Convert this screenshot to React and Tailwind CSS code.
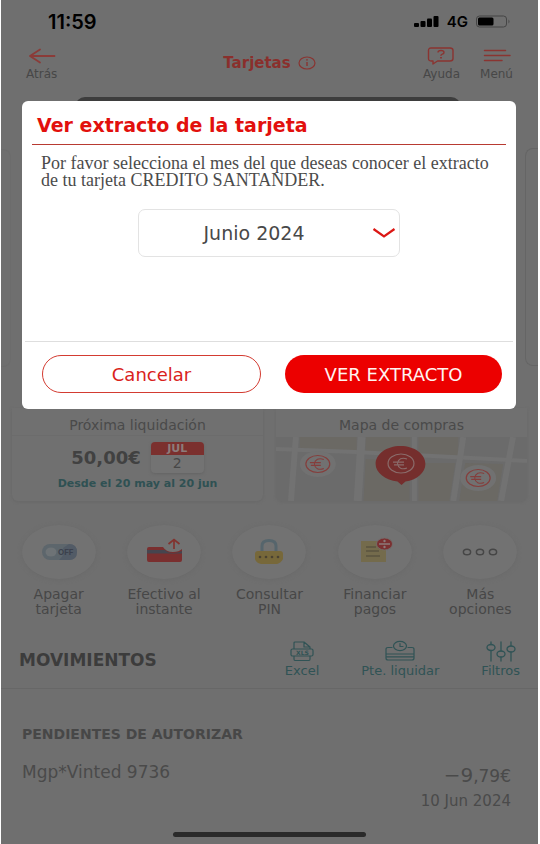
import React from "react";

function StatusBar() {
  return (
    <div className="flex h-[43px] items-center justify-between pl-[47px] pr-[27px] font-['Inter',sans-serif] text-black">
      <span className="text-[20px] font-semibold leading-5">11:59</span>
      <div className="flex items-center gap-2">
        <svg width="25" height="12" viewBox="0 0 25 12" fill="currentColor" aria-hidden="true">
          <rect x="0" y="7" width="5" height="4" rx="1" />
          <rect x="6.500" y="5" width="5" height="6" rx="1" />
          <rect x="13" y="2.500" width="5" height="8.500" rx="1" />
          <rect x="19.500" y="0" width="5" height="11" rx="1" />
        </svg>
        <span className="text-[15px] font-semibold leading-5">4G</span>
        <svg width="35" height="13" viewBox="0 0 35 13" aria-hidden="true">
          <rect x="0.500" y="1" width="30" height="11" rx="3" fill="none" stroke="#454545" />
          <rect x="2" y="2.500" width="15.500" height="8" rx="1.500" fill="#000" />
          <path d="M32.500 4.500q2 2 0 4z" fill="#454545" />
        </svg>
      </div>
    </div>
  );
}

function Header() {
  return (
    <header className="grid h-[54px] grid-cols-3 px-[25px] text-[12px] leading-[14px] text-[#474747]">
      <button className="flex flex-col items-start justify-start pt-[4px]">
        <svg width="30" height="18" viewBox="0 0 30 18" fill="none" stroke="#8b3b38" strokeWidth="1.800" strokeLinecap="round" strokeLinejoin="round" aria-hidden="true">
          <path d="M28.500 9H4M14 2.500L4 9l10 6.500" />
        </svg>
        <span className="mt-[2px]">Atrás</span>
      </button>
      <h1 className="flex h-[40px] items-center justify-center gap-[7px] text-[15px] font-bold leading-5 text-[#8a2f2c]">
        Tarjetas
        <svg width="18" height="14" viewBox="0 0 18 14" fill="none" stroke="#8a3431" aria-hidden="true">
          <ellipse cx="9" cy="7" rx="8" ry="6" strokeWidth="1.200" />
          <path d="M9 6v4" strokeWidth="1.400" />
          <circle cx="9" cy="3.900" r="0.400" fill="#8a3431" />
        </svg>
      </h1>
      <div className="flex items-start justify-end gap-[20px] pt-[4px]">
        <button className="flex flex-col items-center">
          <svg width="28" height="18" viewBox="0 0 28 18" fill="none" stroke="#8a3431" strokeWidth="1.400" strokeLinejoin="round" aria-hidden="true">
            <path d="M4 1h19q3 0 3 2.500v8q0 2.500-3 2.500H10.500L6 17v-3H4q-2.500 0-2.500-2.500v-8Q1.500 1 4 1z" />
            <path d="M11 5.500q0-2 3-2t3 2q0 1.200-1.600 1.700T14 8.800" />
            <path d="M14 10v1.400" strokeWidth="1.800" />
          </svg>
          <span className="mt-[2px]">Ayuda</span>
        </button>
        <button className="flex flex-col items-center">
          <svg width="28" height="18" viewBox="0 0 28 18" fill="none" stroke="#8a3431" strokeWidth="1.500" strokeLinecap="round" aria-hidden="true">
            <path d="M1.500 3.500h21M1.500 8.500h25.500M1.500 13.500h17.500" />
          </svg>
          <span className="mt-[2px]">Menú</span>
        </button>
      </div>
    </header>
  );
}

function CardCarousel() {
  return (
    <div className="flex h-[311px] justify-between">
      <div className="mt-[52px] h-[218px] w-[10px] rounded-r-[8px] border border-l-0 border-[#6c6c6c]" />
      <div className="h-[200px] w-[386px] rounded-[10px] bg-[#3d3d3d]" />
      <div className="mt-[51px] h-[218px] w-[13px] rounded-l-[8px] border border-r-0 border-[#656565]" />
    </div>
  );
}

function Euro({ x, y, rx, ry, color }) {
  return (
    <g fill="none" stroke={color}>
      <ellipse cx={x} cy={y} rx={rx} ry={ry} strokeWidth="1.200" />
      <path
        d={`M${x + 6} ${y - 4.5}c-5-2-9 0-9.500 4.500c0.500 4.500 4.500 6.500 9.500 4.500M${x - 8} ${y - 1.4}h11M${x - 7} ${y + 1.4}h10`}
        strokeWidth="1.100"
      />
    </g>
  );
}

function MapDrawing() {
  return (
    <svg className="block h-[64px] w-full" viewBox="0 0 252 64" preserveAspectRatio="none" aria-hidden="true">
      <rect width="252" height="64" fill="#6b6b6b" />
      <path d="M24 0h57v14L24 13zM90 0h45v17l-45-2zM143 0h40v19l-40-1zM90 22l44 2v40H88zM143 26h37l-6 38h-31zM190 26l38 1-6 37h-38z" fill="#6b6964" />
      <g stroke="#727272" fill="none">
        <path d="M0 12l80 3 172 9" strokeWidth="4" />
        <path d="M20 0l-5 64M188 0l-10 64M238 0l-12 64" strokeWidth="6" />
        <path d="M86 0l-4 64" strokeWidth="8" />
        <path d="M139 0v64" strokeWidth="5" />
      </g>
      <ellipse cx="42" cy="27" rx="18" ry="13" fill="#717171" />
      <ellipse cx="203" cy="41" rx="18" ry="13" fill="#717171" />
      <path d="M125 9c14 0 25 8 25 18 0 9-9 16-20 17.500L126 48l-4-3.500C110 43 100 36 100 27c0-10 11-18 25-18z" fill="#752e2d" />
      <Euro x={42} y={27} rx={12} ry={8.5} color="#853e3c" />
      <Euro x={125.5} y={26.500} rx={13} ry={9.5} color="#8a6b6a" />
      <Euro x={203} y={41} rx={12} ry={8.5} color="#853e3c" />
    </svg>
  );
}

function Summary() {
  return (
    <section className="grid grid-cols-2 gap-[13px] pl-[11px] pr-[11px]">
      <article className="flex h-[93px] flex-col items-center rounded-b-[6px] bg-[#707070] shadow-[0_1px_3px_#686868]">
        <h2 className="flex h-[28px] w-full items-center justify-center border-b border-[#6c6c6c] pt-[6px] text-[14px] leading-4 text-[#4a4a4a]">Próxima liquidación</h2>
        <div className="mt-[6px] flex items-center gap-[10px]">
          <strong className="text-[18px] leading-5 text-[#414141]">50,00€</strong>
          <div className="flex h-[31px] w-[53px] flex-col overflow-hidden rounded-[4px] bg-[#737373] text-center shadow-[0_1px_3px_#646464]">
            <span className="h-[13px] bg-[#7b302e] text-[11px] font-bold leading-[13px] text-[#8d7c7b]">JUL</span>
            <span className="text-[14px] leading-[17px] text-[#474747]">2</span>
          </div>
        </div>
        <p className="mt-[3px] text-[11px] font-bold leading-[16px] text-[#2f5153]">Desde el 20 may al 20 jun</p>
      </article>
      <article className="h-[93px] overflow-hidden rounded-b-[6px] bg-[#707070] shadow-[0_1px_3px_#696969]">
        <h2 className="flex h-[29px] items-center justify-center pt-[5px] text-[14px] leading-4 text-[#4a4a4a]">Mapa de compras</h2>
        <MapDrawing />
      </article>
    </section>
  );
}

const actionIcons = {
  toggle: (
    <>
      <rect x="20" y="19" width="35" height="16" rx="8" fill="#5d666c" />
      <path d="M47 19q8 0 8 8t-8 8H37q7-6 4-12 3-2 6-4z" fill="#525b66" />
      <ellipse cx="29" cy="27" rx="5.500" ry="4.500" fill="#6e7376" />
      <text x="36" y="30" fontSize="8" fontWeight="700" fontFamily="Inter, sans-serif" fill="#3c414d">OFF</text>
    </>
  ),
  cash: (
    <>
      <path d="M20 24q0-2 2-2h14q3 5 10 5 6 0 9-3v11q0 2-2 2H22q-2 0-2-2z" fill="#7a2f2f" />
      <path d="M20 25h18q3 3 8 3t9-2v2.500H20z" fill="#46454f" />
      <path d="M47 24V15M41.500 19l5.500-4.500 5.500 4.500" stroke="#82332f" strokeWidth="1.700" fill="none" />
    </>
  ),
  lock: (
    <>
      <path d="M30 28v-7q0-5.500 7-5.500t7 5.500v7" stroke="#56656c" strokeWidth="3" fill="none" />
      <path d="M23 29q0-3 3-3h22q3 0 3 3v5q-2 4-6 5H29q-5-1-6-5z" fill="#77683a" />
      <g fill="#4a4232"><circle cx="28" cy="32" r="1.300" /><circle cx="34" cy="32" r="1.300" /><circle cx="40" cy="32" r="1.300" /><circle cx="46" cy="32" r="1.300" /></g>
    </>
  ),
  note: (
    <>
      <path d="M23 16h25v21H23z" fill="#746b4c" />
      <path d="M28 22h10M28 26h13M28 31h14" stroke="#4d4838" strokeWidth="1.200" />
      <ellipse cx="46.500" cy="19" rx="8" ry="6" fill="#7b3031" stroke="#737170" strokeWidth="0.800" />
      <path d="M41 19h11" stroke="#8c7a7a" strokeWidth="1.600" />
      <g fill="#8c7a7a"><circle cx="46.500" cy="16" r="1.200" /><circle cx="46.500" cy="22" r="1.200" /></g>
    </>
  ),
  more: (
    <g fill="none" stroke="#464646" strokeWidth="1.500">
      <ellipse cx="24" cy="27" rx="3.600" ry="2.800" /><ellipse cx="37" cy="27" rx="3.600" ry="2.800" /><ellipse cx="50" cy="27" rx="3.600" ry="2.800" />
    </g>
  ),
};

const actions = [
  ["toggle", "Apagar", "tarjeta"],
  ["cash", "Efectivo al", "instante"],
  ["lock", "Consultar", "PIN"],
  ["note", "Financiar", "pagos"],
  ["more", "Más", "opciones"],
];

function Actions() {
  return (
    <nav className="mt-[24px] grid grid-cols-5 pl-[5px] pr-[5px]">
      {actions.map(([icon, first, second]) => (
        <button key={icon} className="flex flex-col items-center text-[14px] leading-[15px] text-[#474747]">
          <svg className="mb-[8px] rounded-[50%] shadow-[0_1px_4px_#6a6a6a]" width="74" height="54" viewBox="0 0 74 54" aria-hidden="true">
            <ellipse cx="37" cy="27" rx="37" ry="27" fill="#727272" />
            {actionIcons[icon]}
          </svg>
          <span>{first}</span>
          <span>{second}</span>
        </button>
      ))}
    </nav>
  );
}

function Movements() {
  return (
    <section>
      <div className="mt-[22px] flex h-[50px] items-start justify-between border-b border-[#676767] pl-[18px] pr-[18px]">
        <h2 className="pt-[11px] text-[17px] font-bold leading-5 text-[#3c3c3c]">MOVIMIENTOS</h2>
        <div className="flex gap-[42px] pt-px text-[13px] leading-[14px] text-[#305355]">
          <button className="flex flex-col items-center">
            <svg width="26" height="22" viewBox="0 0 26 22" fill="none" stroke="currentColor" strokeWidth="1.200" strokeLinejoin="round" aria-hidden="true">
              <path d="M5 9V3q0-1 1-1h9l6 5v2M15 2v5h6M5 16v3q0 1.500 1 1.500h14q1 0 1-1.500v-3" />
              <rect x="2" y="9" width="22" height="7" rx="1.500" />
              <text x="7" y="15" fontSize="6" fontWeight="700" fill="currentColor" stroke="none">XLS</text>
            </svg>
            <span className="mt-[2px]">Excel</span>
          </button>
          <button className="flex flex-col items-center">
            <svg width="32" height="22" viewBox="0 0 32 22" fill="none" stroke="currentColor" strokeWidth="1.200" strokeLinecap="round" strokeLinejoin="round" aria-hidden="true">
              <ellipse cx="16" cy="6" rx="6.500" ry="4.700" />
              <path d="M16 3.500V6.500h3M8 7.500H4Q2 7.500 2 9.500V18q0 2 2 2h24q2 0 2-2V9.500q0-2-2-2h-4M2 14h28M2 16.800h28" />
            </svg>
            <span className="mt-[2px]">Pte. liquidar</span>
          </button>
          <button className="flex flex-col items-center">
            <svg width="30" height="22" viewBox="0 0 30 22" fill="none" stroke="currentColor" strokeWidth="1.300" strokeLinecap="round" aria-hidden="true">
              <path d="M5 2v2.500M5 10.500V21M15 2v9M15 17v4M25 2v4M25 12v9" />
              <ellipse cx="5" cy="7.500" rx="4" ry="3" /><ellipse cx="15" cy="14" rx="4" ry="3" /><ellipse cx="25" cy="9" rx="4" ry="3" />
            </svg>
            <span className="mt-[2px]">Filtros</span>
          </button>
        </div>
      </div>
      <div className="pl-[21px] pr-[27px]">
        <h3 className="pt-[37px] text-[14px] font-bold leading-4 text-[#474747]">PENDIENTES DE AUTORIZAR</h3>
        <div className="mt-[20px] flex justify-between text-[#4a4a4a]">
          <p className="text-[17px] leading-5">Mgp*Vinted 9736</p>
          <div className="flex flex-col items-end">
            <p className="pt-[3px] text-[17px] leading-5"><span className="text-[20px]">−9</span>,79€</p>
            <p className="mt-[7px] text-[15px] leading-4">10 Jun 2024</p>
          </div>
        </div>
      </div>
    </section>
  );
}

function StatementDialog() {
  return (
    <div role="dialog" aria-modal="true" aria-labelledby="dialog-title" className="absolute left-[22px] right-[24px] top-[101px] rounded-[6px] bg-white pb-[16px]">
      <h2 id="dialog-title" className="mx-[10px] h-[44px] border-b border-[#b83a31] pl-[5px] pt-[12px] text-[19px] font-bold leading-6 text-[#e2100d]">
        Ver extracto de la tarjeta
      </h2>
      <label htmlFor="month" className="block pl-[19px] pr-[10px] pt-[10px] font-['Liberation_Serif',serif] text-[18px] leading-[17px] text-[#4b4b4b]">
        Por favor selecciona el mes del que deseas conocer el extracto
        <br />
        de tu tarjeta CREDITO SANTANDER.
      </label>
      <div className="relative mx-auto mt-[20px] w-[262px]">
        <select id="month" defaultValue="Junio 2024" className="h-[48px] w-full appearance-none rounded-[7px] border border-[#e3e3e3] bg-white pr-[30px] text-center text-[19px] text-[#484848] [text-align-last:center]">
          <option>Junio 2024</option>
        </select>
        <svg className="pointer-events-none absolute right-[4px] top-[18px]" width="24" height="13" viewBox="0 0 24 13" fill="none" stroke="#dc1714" strokeWidth="2.200" aria-hidden="true">
          <path d="M1.500 2L12 9.500 22.500 2" />
        </svg>
      </div>
      <div className="mx-[3px] mt-[84px] flex gap-[24px] border-t border-[#dedede] pl-[17px] pr-[11px] pt-[13px]">
        <button className="h-[38px] flex-1 rounded-full border border-[#d33b31] text-[18px] text-[#d9231c]">Cancelar</button>
        <button className="h-[38px] flex-1 rounded-full bg-[#ec0000] text-[18px] text-[#fff3f0]">VER EXTRACTO</button>
      </div>
    </div>
  );
}

export default function App() {
  return (
    <div className="relative min-h-screen bg-white pl-px pr-[2px] font-['DejaVu_Sans',sans-serif]">
      <div className="flex min-h-screen flex-col bg-[#6f6f6f]">
        <StatusBar />
        <Header />
        <CardCarousel />
        <Summary />
        <Actions />
        <Movements />
        <div className="mx-auto mb-[7px] mt-auto h-[5px] w-[193px] rounded-full bg-[#2a2a2a]" />
      </div>
      <StatementDialog />
    </div>
  );
}
